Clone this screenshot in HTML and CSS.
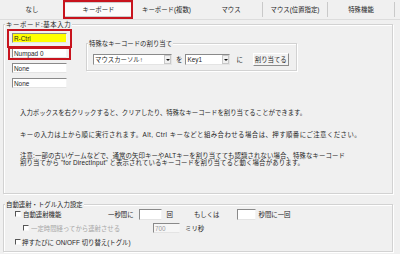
FILE: index.html
```html
<!DOCTYPE html>
<html lang="ja">
<head>
<meta charset="utf-8">
<link rel="stylesheet" href="styles.css">
</head>
<body>
<div class="tabs">
  <div class="tab t1">なし</div>
  <div class="tab t2">キーボード</div>
  <div class="tab t3">キーボード(複数)</div>
  <div class="tab t4 sep">マウス</div>
  <div class="tab t5 sep">マウス(位置指定)</div>
  <div class="tab t6 sep">特殊機能</div>
</div>
<div class="panel">
  <div class="group g1">
    <span class="glabel wide">キーボード:基本入力</span>
    <div class="toprow">
      <div class="keycol">
        <div class="inp hl">R-Ctrl</div>
        <div class="inp">Numpad 0</div>
        <div class="inp">None</div>
        <div class="inp">None</div>
      </div>
      <div class="group special">
        <span class="glabel">特殊なキーコードの割り当て</span>
        <div class="srow">
          <div class="combo c1"><span class="ctext">マウスカーソル↑</span><span class="arrow"></span></div>
          <span class="wo">を</span>
          <div class="combo c2"><span class="ctext">Key1</span><span class="arrow"></span></div>
          <span class="ni">に</span>
          <div class="btn">割り当てる</div>
        </div>
      </div>
    </div>
    <p class="para p1">入力ボックスを右クリックすると、クリアしたり、特殊なキーコードを割り当てることができます。</p>
    <p class="para p2">キーの入力は上から順に実行されます。Alt, Ctrl キーなどと組み合わせる場合は、押す順番にご注意ください。</p>
    <p class="para p3">注意:一部の古いゲームなどで、通常の矢印キーやALTキーを割り当てても認識されない場合、特殊なキーコード<br>割り当てから "for DirectInput" と表示されているキーコードを割り当てると動く場合があります。</p>
  </div>
  <div class="group g2">
    <span class="glabel">自動連射・トグル入力設定</span>
    <div class="row r1">
      <div class="cbwrap w1"><span class="cb"></span><span class="cbl l1">自動連射機能</span></div>
      <span>一秒間に</span>
      <div class="inp small i1"></div>
      <span class="kai">回</span>
      <span class="moshi">もしくは</span>
      <div class="inp small i2"></div>
      <span class="byou">秒間に一回</span>
    </div>
    <div class="row r2">
      <div class="cbwrap w2"><span class="cb"></span><span class="cbl dis">一定時間経ってから連射させる</span></div>
      <div class="inp small i3 distext">700</div>
      <span class="miri">ミリ秒</span>
    </div>
    <div class="row r3">
      <div class="cbwrap w3"><span class="cb"></span><span class="cbl l3">押すたびに ON/OFF 切り替え(トグル)</span></div>
    </div>
  </div>
</div>
<div class="mark m-tab"></div>
<div class="mark m-k1"></div>
<div class="mark m-k2"></div>
</body>
</html>
```
FILE: styles.css
```css
* { box-sizing: border-box; margin: 0; padding: 0; }
html, body { width: 400px; height: 254px; overflow: hidden; }
body {
  background: #f0f0f0;
  font-family: "Liberation Sans", "Noto Sans CJK JP", sans-serif;
  font-size: 6.4px;
  line-height: 7px;
  color: #1e1e1e;
  position: relative;
}
.tabs { display: flex; height: 19px; align-items: center; }
.tab { height: 15px; display: flex; align-items: center; justify-content: center; white-space: nowrap; }
.t1 { width: 64px; }
.t2 { width: 69px; background: #fbfbfb; border: 1px solid #cdcdcd; }
.t3 { width: 67px; }
.t4 { width: 63px; }
.t5 { width: 65px; }
.t6 { width: 67px; }
.sep { border-right: 1px solid #c9c9c9; }

.panel { border-top: 1px solid #dcdcdc; padding: 4px 7px 0 3px; display: flex; flex-direction: column; }
.group { position: relative; border: 1px solid #d2d2d2; box-shadow: 1px 1px 0 #fff, inset 1px 1px 0 #fff; }
.glabel { position: absolute; top: -4px; left: 1px; padding: 0 1px; background: #f0f0f0; white-space: nowrap; }
.glabel.wide { letter-spacing: 0.6px; }
.g1 { height: 170px; padding: 8px 0 0 8px; }
.g2 { height: 48px; margin-top: 10px; padding: 2px 0 0 0; }

.toprow { display: flex; align-items: flex-start; }
.keycol { width: 55px; display: flex; flex-direction: column; gap: 5px; }
.inp {
  height: 10px; background: #fff;
  border-top: 1px solid #8a8a8a; border-left: 1px solid #8a8a8a;
  border-bottom: 1px solid #e4e4e4; border-right: 1px solid #f4f4f4;
  padding-left: 1px; display: flex; align-items: center; white-space: nowrap;
}
.inp.hl { background: #ffff00; }

.special { margin-left: 19px; margin-top: 10px; width: 211px; height: 28px; padding: 9px 0 0 6px; }
.special .glabel { left: 1px; }
.srow { display: flex; align-items: center; height: 13px; }
.combo {
  height: 11px; background: #fff; display: flex; align-items: stretch;
  border-top: 1px solid #8a8a8a; border-left: 1px solid #8a8a8a;
  border-bottom: 1px solid #e4e4e4; border-right: 1px solid #e4e4e4;
}
.ctext { flex: 1; padding-left: 1px; display: flex; align-items: center; white-space: nowrap; overflow: hidden; }
.arrow { width: 7px; background: #f0f0f0; border: 1px solid #c8c8c8; position: relative; }
.arrow::after {
  content: ""; position: absolute; left: 1px; top: 3px;
  border-left: 2px solid transparent; border-right: 2px solid transparent; border-top: 2px solid #111;
}
.c1 { width: 79px; }
.c2 { width: 45px; margin-left: 3px; }
.wo { margin-left: 4px; }
.ni { margin-left: 6px; }
.btn {
  margin-left: 10px; width: 36px; height: 13px; display: flex; align-items: center; justify-content: center;
  background: #f2f2f2; border-top: 1px solid #fff; border-left: 1px solid #fff;
  border-right: 1px solid #8a8a8a; border-bottom: 1px solid #8a8a8a;
}

.para { margin-left: 8px; white-space: nowrap; }
.p1 { margin-top: 21px; }
.p2 { margin-top: 15px; letter-spacing: 0.45px; }
.p3 { margin-top: 14px; letter-spacing: 0.12px; }

.row { height: 14px; display: flex; align-items: center; white-space: nowrap; }
.cbwrap { display: flex; align-items: center; }
.cb {
  width: 6px; height: 6px; background: #fff;
  border-top: 1px solid #555; border-left: 1px solid #555;
  border-bottom: 1px solid #f8f8f8; border-right: 1px solid #f8f8f8;
}
.w1 { width: 93px; margin-left: 11px; }
.l1 { margin-left: 4px; }
.w2 { width: 130px; margin-left: 19px; }
.w3 { margin-left: 11px; }
.cbl { margin-left: 2px; }
.l3 { margin-left: 1px; }
.dis { color: #a6a6a6; }
.small { height: 11px; }
.i1 { width: 23px; margin-left: 5px; }
.kai { margin-left: 5px; }
.moshi { margin-left: 21px; }
.i2 { width: 19px; margin-left: 17px; }
.byou { margin-left: 3px; }
.i3 { width: 27px; height: 10px; background: #f6f6f6; }
.distext { color: #9a9a9a; }
.miri { margin-left: 5px; }

.mark { position: absolute; border: 2px solid #c8141e; }
.m-tab { left: 63px; top: 0; width: 70px; height: 19px; }
.m-k1 { left: 7px; top: 29px; width: 65px; height: 19px; }
.m-k2 { left: 8px; top: 47px; width: 63px; height: 13px; }
```
